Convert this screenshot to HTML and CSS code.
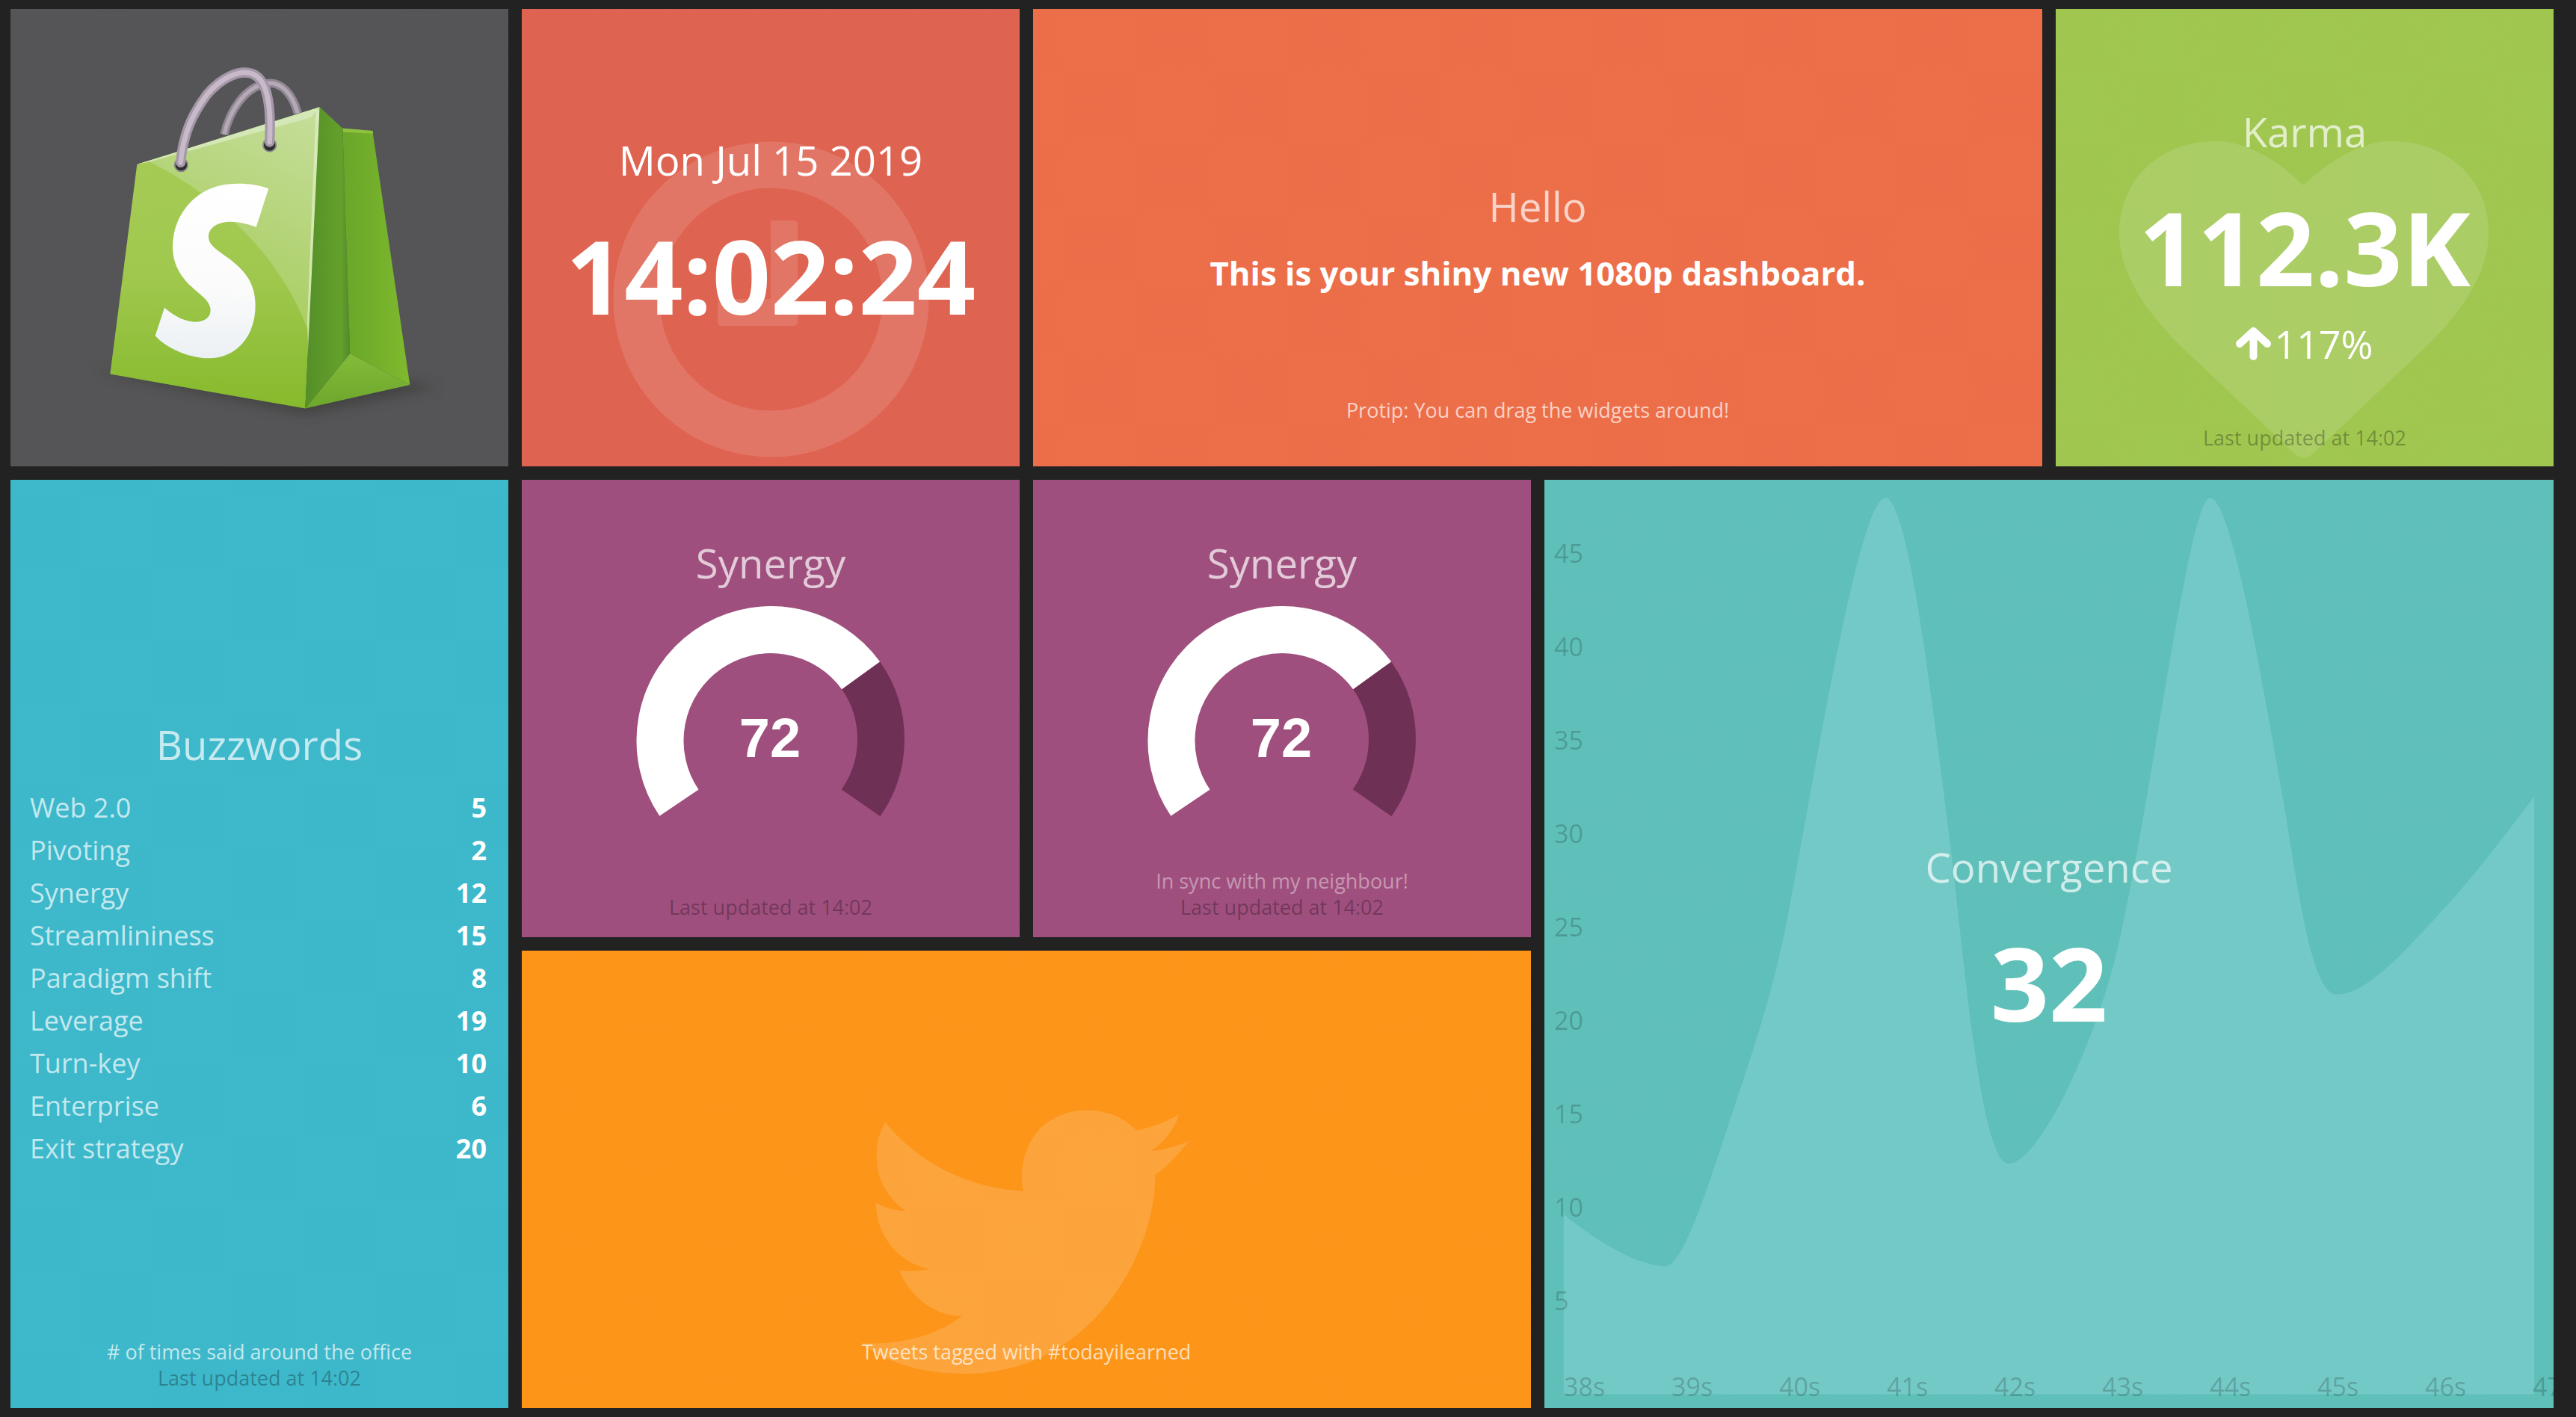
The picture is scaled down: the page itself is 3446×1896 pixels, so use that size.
FILE: index.html
```html
<!DOCTYPE html>
<html lang="en">
<head>
    <meta charset="UTF-8">
    <title>Dashboard</title>
    <link rel="stylesheet" href="styles.css">
</head>
<body>
    <div class="board">
        <!-- logo -->
        <div class="widget widget-logo">
            <svg class="bag" viewBox="0 0 666 612">
                <defs>
                    <linearGradient id="bagFront" x1="0" y1="0" x2="0" y2="1">
                        <stop offset="0" stop-color="#a8cc58"/>
                        <stop offset="0.55" stop-color="#a0c84e"/>
                        <stop offset="1" stop-color="#86ba2c"/>
                    </linearGradient>
                    <linearGradient id="bagSheen" x1="1" y1="0" x2="0.6" y2="1">
                        <stop offset="0" stop-color="#c6de9b"/>
                        <stop offset="1" stop-color="#a6cc5c"/>
                    </linearGradient>
                    <linearGradient id="bagFold" x1="0" y1="0" x2="1" y2="0">
                        <stop offset="0" stop-color="#548f28"/>
                        <stop offset="0.8" stop-color="#63a02b"/>
                        <stop offset="1" stop-color="#4f8a27"/>
                    </linearGradient>
                    <linearGradient id="bagSide" x1="0" y1="0" x2="1" y2="0">
                        <stop offset="0" stop-color="#69a62a"/>
                        <stop offset="1" stop-color="#7fb92d"/>
                    </linearGradient>
                    <linearGradient id="bagFoot" x1="0" y1="0" x2="0" y2="1">
                        <stop offset="0" stop-color="#84bb3a"/>
                        <stop offset="1" stop-color="#6ca62b"/>
                    </linearGradient>
                    <linearGradient id="bagLetter" x1="0" y1="0" x2="0" y2="1">
                        <stop offset="0" stop-color="#ffffff"/>
                        <stop offset="0.6" stop-color="#fbfbfb"/>
                        <stop offset="1" stop-color="#ebf0f3"/>
                    </linearGradient>
                    <filter id="bagShadow" x="-20%" y="-100%" width="140%" height="300%">
                        <feGaussianBlur stdDeviation="22"/>
                    </filter>
                </defs>
                <!-- traced at 3x, so everything inside sits in a 1/3 scale group -->
                <g transform="translate(116 68) scale(0.3333)">
                    <path d="M-10 1250L840 1425L1370 1315L1250 1290L50 1250Z" fill="#3a3a3a" opacity="0.65" filter="url(#bagShadow)"/>
                    <path class="handle-back" d="M510 300C530 210 590 110 680 95C740 85 785 140 805 215"/>
                    <path class="handle-back-light" d="M510 300C530 210 590 110 680 95C740 85 785 140 805 215"/>
                    <path d="M160 420L893 190L835 1400L52 1262Z" fill="url(#bagFront)"/>
                    <path d="M165 418L893 200L850 1100C800 950 700 800 590 690C520 620 400 500 210 410Z" fill="url(#bagSheen)"/>
                    <path d="M160 420L893 190L858 232L215 408Z" fill="#d4e7b6"/>
                    <path d="M893 190L878 205L843 1050L850 1250Z" fill="#e0efc8" opacity="0.7"/>
                    <path d="M893 190L985 275L1015 1180L835 1400Z" fill="url(#bagFold)"/>
                    <path d="M985 275L1105 285L1255 1305L1015 1180Z" fill="url(#bagSide)"/>
                    <path d="M985 275L1105 285L1108 296L988 290Z" fill="#8ec23e"/>
                    <path d="M1015 1180L1255 1305L835 1400Z" fill="url(#bagFoot)"/>
                    <circle class="eyelet" cx="337" cy="422" r="26"/>
                    <circle class="eyelet" cx="692" cy="342" r="26"/>
                    <path class="handle" d="M335 412C345 300 380 220 440 140C500 70 570 40 620 55C680 75 700 170 692 330"/>
                    <path class="handle-light" d="M335 412C345 300 380 220 440 140C500 70 570 40 620 55C680 75 700 170 692 330"/>
                    <path d="M688 517C640 500 590 495 550 498C400 500 303 620 303 750C303 830 345 885 400 930C435 958 455 980 455 1005C455 1035 430 1052 395 1052C350 1052 305 1025 270 995L233 1108C280 1160 370 1198 450 1198C555 1198 635 1115 635 985C635 890 585 840 525 795C485 765 447 745 447 710C447 670 490 650 535 650C570 650 610 660 638 672Z" fill="url(#bagLetter)"/>
                </g>
            </svg>
        </div>

        <!-- clock -->
        <div class="widget widget-clock">
            <svg class="bg-icon clock-icon" viewBox="0 0 423 423">
                <circle cx="211.5" cy="211.5" r="180" fill="none" stroke="#fff" stroke-width="62"/>
                <path d="M211 106H241Q247 106 247 112V241Q247 247 241 247H146Q140 247 140 241V217Q140 211 146 211H211Z" fill="#fff"/>
            </svg>
            <div class="main main-clock">
                <div class="title date">Mon Jul 15 2019</div>
                <div class="number">14:02:24</div>
            </div>
        </div>

        <!-- hello -->
        <div class="widget widget-hello">
            <div class="main">
                <div class="title">Hello</div>
                <div class="hello-text">This is your shiny new 1080p dashboard.</div>
            </div>
            <div class="foot foot-hello">
                <div class="more-info">Protip: You can drag the widgets around!</div>
            </div>
        </div>

        <!-- karma -->
        <div class="widget widget-karma">
            <svg class="bg-icon heart-icon" viewBox="284 450 1038 1006" preserveAspectRatio="none">
                <path d="M802 590C730 510 640 450 555 450C400 450 284 570 284 740C284 900 400 1040 480 1125L775 1440Q802 1470 830 1440L1125 1125C1205 1040 1322 900 1322 740C1322 570 1205 450 1050 450C965 450 875 510 802 590Z" fill="#fff"/>
            </svg>
            <div class="main">
                <div class="title">Karma</div>
                <div class="number">112.3K</div>
                <div class="change">
                    <svg class="arrow" viewBox="0 0 47 44"><path d="M23.5 39V6M5 22L23.5 5L42 22"/></svg>
                    <span>117%</span>
                </div>
            </div>
            <div class="foot foot-karma">
                <div class="updated">Last updated at 14:02</div>
            </div>
        </div>

        <!-- buzzwords -->
        <div class="widget widget-buzz">
            <div class="main">
                <div class="title">Buzzwords</div>
                <ul class="buzz-list">
                    <li><span>Web 2.0</span><b>5</b></li>
                    <li><span>Pivoting</span><b>2</b></li>
                    <li><span>Synergy</span><b>12</b></li>
                    <li><span>Streamlininess</span><b>15</b></li>
                    <li><span>Paradigm shift</span><b>8</b></li>
                    <li><span>Leverage</span><b>19</b></li>
                    <li><span>Turn-key</span><b>10</b></li>
                    <li><span>Enterprise</span><b>6</b></li>
                    <li><span>Exit strategy</span><b>20</b></li>
                </ul>
            </div>
            <div class="foot">
                <div class="more-info">&#35; of times said around the office</div>
                <div class="updated">Last updated at 14:02</div>
            </div>
        </div>

        <!-- meters -->
        <div class="widget widget-meter">
            <div class="main main-meter">
                <div class="title">Synergy</div>
                <div class="gauge">
                    <svg viewBox="0 0 360 360">
                        <path class="gauge-rest" d="M301.6 94.8A148.5 148.5 0 0 1 301.6 265.2"/>
                        <path class="gauge-value" d="M58.4 265.2A148.5 148.5 0 0 1 301.6 94.8"/>
                    </svg>
                    <div class="gauge-number">72</div>
                </div>
            </div>
            <div class="foot">
                <div class="updated">Last updated at 14:02</div>
            </div>
        </div>

        <div class="widget widget-meter">
            <div class="main main-meter">
                <div class="title">Synergy</div>
                <div class="gauge">
                    <svg viewBox="0 0 360 360">
                        <path class="gauge-rest" d="M301.6 94.8A148.5 148.5 0 0 1 301.6 265.2"/>
                        <path class="gauge-value" d="M58.4 265.2A148.5 148.5 0 0 1 301.6 94.8"/>
                    </svg>
                    <div class="gauge-number">72</div>
                </div>
            </div>
            <div class="foot">
                <div class="more-info">In sync with my neighbour!</div>
                <div class="updated">Last updated at 14:02</div>
            </div>
        </div>

        <!-- convergence -->
        <div class="widget widget-graph">
            <svg class="graph-area" viewBox="18 15 1516 1538" preserveAspectRatio="none">
                <path d="M47 1232C100 1280 160 1318 200 1318C225 1318 260 1200 300 1065C335 950 365 850 385 730C420 530 490 45 530 45C565 45 600 380 630 640C650 830 675 1148 715 1148C760 1148 840 960 875 810C925 590 985 45 1018 45C1050 45 1095 340 1130 560C1150 690 1170 868 1208 868C1255 868 1315 790 1370 725C1420 665 1470 590 1505 540L1505 1530L47 1530Z"/>
            </svg>
            <div class="y-axis">
                <span>45</span><span>40</span><span>35</span><span>30</span><span>25</span><span>20</span><span>15</span><span>10</span><span>5</span>
            </div>
            <div class="x-axis">
                <span>38s</span><span>39s</span><span>40s</span><span>41s</span><span>42s</span><span>43s</span><span>44s</span><span>45s</span><span>46s</span><span>47s</span>
            </div>
            <div class="main main-graph">
                <div class="title">Convergence</div>
                <div class="number">32</div>
            </div>
        </div>

        <!-- tweets -->
        <div class="widget widget-tweets">
            <svg class="bg-icon bird-icon" viewBox="188 254 1144 1058" preserveAspectRatio="none">
                <path d="M273 304C380 460 560 570 755 580C735 480 770 340 860 290C950 230 1080 250 1150 337C1205 325 1255 300 1298 273C1285 330 1245 385 1200 420C1245 415 1290 400 1332 380C1300 430 1260 478 1215 515C1220 800 1010 1312 550 1312C400 1312 280 1270 188 1190C340 1200 460 1150 540 1082C440 1080 355 1000 322 898C360 905 395 900 428 892C320 870 240 760 240 628C275 648 310 658 345 660C280 610 242 530 242 440C242 390 250 345 273 304Z" fill="#fff"/>
            </svg>
            <div class="main"></div>
            <div class="foot">
                <div class="more-info">Tweets tagged with #todayilearned</div>
                <div class="updated">&nbsp;</div>
            </div>
        </div>
    </div>
</body>
</html>
```

FILE: styles.css
```css
html, body { margin: 0; height: 100%; background: #222; }
body { font-family: "Open Sans", sans-serif; color: #fff; overflow: hidden; }

.board {
    display: grid;
    grid-template-columns: repeat(5, 666px);
    grid-template-rows: repeat(3, 612px);
    gap: 18px;
    padding: 12px 0 0 14px;
}

.widget {
    position: relative;
    overflow: hidden;
    display: grid;
    grid-template-rows: minmax(0, 1fr) auto minmax(0, 1fr);
    text-align: center;
    /* fine checker over the flat colours */
    background-image: repeating-conic-gradient(rgba(0, 0, 0, 0.025) 0 25%, transparent 0 50%);
    background-size: 2px 2px;
}
.main { grid-row: 2; position: relative; }
.foot { grid-row: 3; align-self: end; position: relative; padding-bottom: 23px; font-size: 27px; line-height: 35px; }

.widget-logo { background-color: #565658; }
.widget-clock { background-color: #e16452; }
.widget-hello { grid-column: span 2; background-color: #ef704a; }
.widget-karma { background-color: #a2c951; }
.widget-buzz { grid-row: span 2; background-color: #3ebacd; }
.widget-meter { background-color: #a1507f; }
.widget-graph { grid-column: span 2; grid-row: span 2; background-color: #60c2bb; }
.widget-tweets { grid-column: span 2; background-color: #ff9719; }

.title { font-size: 54.5px; line-height: 70px; color: rgba(255, 255, 255, 0.7); }
.number { font-size: 137px; font-weight: 700; line-height: 190px; margin-top: 24px; }
.more-info { color: rgba(255, 255, 255, 0.7); }
.widget-meter .more-info { color: rgba(255, 255, 255, 0.42); }
.updated { color: rgba(0, 0, 0, 0.3); }

/* faint icons behind the text */
.bg-icon { position: absolute; opacity: 0.12; }
.clock-icon { left: 122px; top: 177px; width: 423px; height: 423px; }
.heart-icon { left: 85px; top: 177px; width: 494px; height: 424px; }
.bird-icon { left: 454px; top: 213px; width: 438px; height: 353px; opacity: 0.15; }

.bag { width: 666px; height: 612px; grid-row: 1 / 4; }
.handle { fill: none; stroke: #a498a8; stroke-width: 40; stroke-linecap: round; }
.handle-light { fill: none; stroke: #c8bac8; stroke-width: 20; stroke-linecap: round; }
.handle-back { fill: none; stroke: #8f8791; stroke-width: 34; }
.handle-back-light { fill: none; stroke: #b5a9b7; stroke-width: 16; }
.eyelet { fill: #2d2d2d; stroke: #8a8a8a; stroke-width: 6; }

.date { color: #fff; }
.main-clock { margin-top: 6px; }
.main-graph { margin-top: 8px; }
.main-meter { margin-bottom: 10px; }

.hello-text { font-size: 43.8px; font-weight: 700; line-height: 60px; margin-top: 24px; }
.foot-hello { padding-bottom: 58px; }

.change { display: flex; justify-content: center; align-items: center; font-size: 52px; line-height: 70px; }
.arrow { width: 47px; height: 44px; margin-right: 4px; fill: none; stroke: #fff; stroke-width: 10; stroke-linecap: round; stroke-linejoin: round; }
.foot-karma { padding-bottom: 21px; }

.buzz-list { list-style: none; margin: 21px 0 0; padding: 0 29px 0 26px; font-size: 36px; line-height: 57px; text-align: left; }
.buzz-list li { display: flex; justify-content: space-between; }
.buzz-list span { color: rgba(255, 255, 255, 0.7); }

.gauge { position: relative; width: 360px; height: 360px; margin: 21px 0 0 152px; }
.gauge svg { display: block; width: 360px; height: 360px; }
.gauge-value, .gauge-rest { fill: none; stroke-width: 63; }
.gauge-value { stroke: #fff; }
.gauge-rest { stroke: #6f3056; }
.gauge-number {
    position: absolute;
    left: 0;
    right: 0;
    top: 139px;
    font-family: "Liberation Sans", Arial, sans-serif;
    font-size: 74px;
    font-weight: 700;
    line-height: 80px;
}

.graph-area { position: absolute; left: 0; top: 0; width: 100%; height: 100%; }
.graph-area path { fill: #73c9c6; }
.y-axis, .x-axis { position: absolute; font-size: 34px; color: rgba(0, 0, 0, 0.2); }
.y-axis { left: 13px; top: 36px; display: flex; flex-direction: column; text-align: left; }
.y-axis span { height: 125px; line-height: 125px; }
.x-axis { left: 26px; top: 1190px; display: flex; line-height: 46px; text-align: left; }
.x-axis span { flex: 0 0 144px; }
```
